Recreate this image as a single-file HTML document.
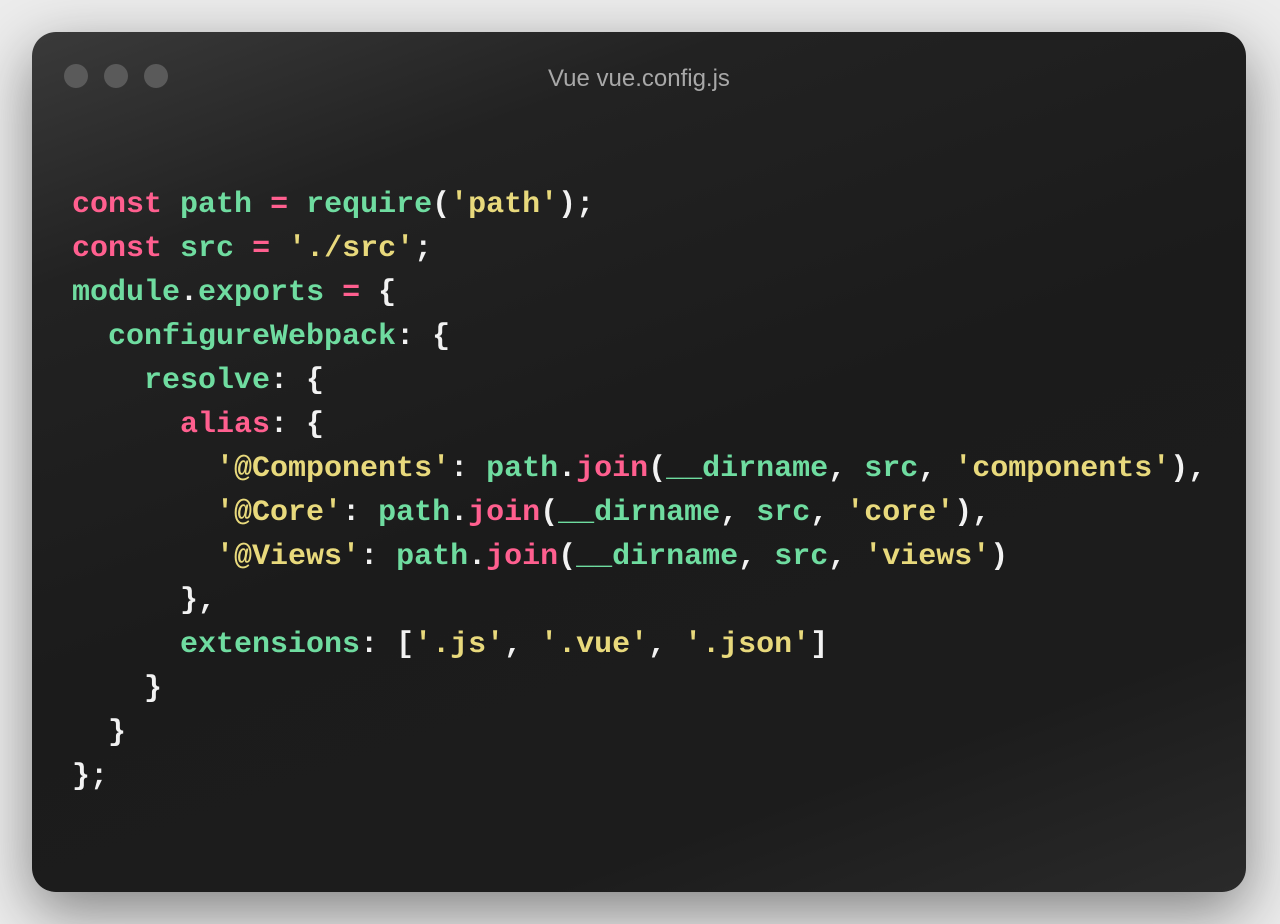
<!DOCTYPE html>
<html><head><meta charset="utf-8"><style>
html,body{margin:0;padding:0;}
body{width:1280px;height:924px;background:#ececec;position:relative;overflow:hidden;font-family:"Liberation Sans",sans-serif;}
.win{position:absolute;left:32px;top:32px;width:1214px;height:860px;border-radius:24px;
background:linear-gradient(160deg,#3a3a3a 0%,#222 20%,#1b1b1b 50%,#1c1c1c 80%,#2a2a2a 100%);
box-shadow:0 20px 60px rgba(0,0,0,0.45);}
.dot{position:absolute;top:32px;width:24px;height:24px;border-radius:50%;background:#5a5a5a;}
.title{position:absolute;top:33px;left:0;right:0;text-align:center;color:#a8a8a8;font-size:24px;}
pre{position:absolute;left:40px;top:151px;margin:0;font-family:"Liberation Mono",monospace;font-size:30px;font-weight:bold;line-height:44px;color:#f2f2f2;}
.k{color:#ff5f8f}.g{color:#6fdca0}.y{color:#e8d97c}
</style></head><body>
<div class="win">
<div class="dot" style="left:32px"></div><div class="dot" style="left:72px"></div><div class="dot" style="left:112px"></div>
<div class="title">Vue vue.config.js</div>
<pre><span class="k">const</span> <span class="g">path</span> <span class="k">=</span> <span class="g">require</span>(<span class="y">'path'</span>);
<span class="k">const</span> <span class="g">src</span> <span class="k">=</span> <span class="y">'./src'</span>;
<span class="g">module</span>.<span class="g">exports</span> <span class="k">=</span> {
  <span class="g">configureWebpack</span>: {
    <span class="g">resolve</span>: {
      <span class="k">alias</span>: {
        <span class="y">'@Components'</span>: <span class="g">path</span>.<span class="k">join</span>(<span class="g">__dirname</span>, <span class="g">src</span>, <span class="y">'components'</span>),
        <span class="y">'@Core'</span>: <span class="g">path</span>.<span class="k">join</span>(<span class="g">__dirname</span>, <span class="g">src</span>, <span class="y">'core'</span>),
        <span class="y">'@Views'</span>: <span class="g">path</span>.<span class="k">join</span>(<span class="g">__dirname</span>, <span class="g">src</span>, <span class="y">'views'</span>)
      },
      <span class="g">extensions</span>: [<span class="y">'.js'</span>, <span class="y">'.vue'</span>, <span class="y">'.json'</span>]
    }
  }
};</pre>
</div>
</body></html>
